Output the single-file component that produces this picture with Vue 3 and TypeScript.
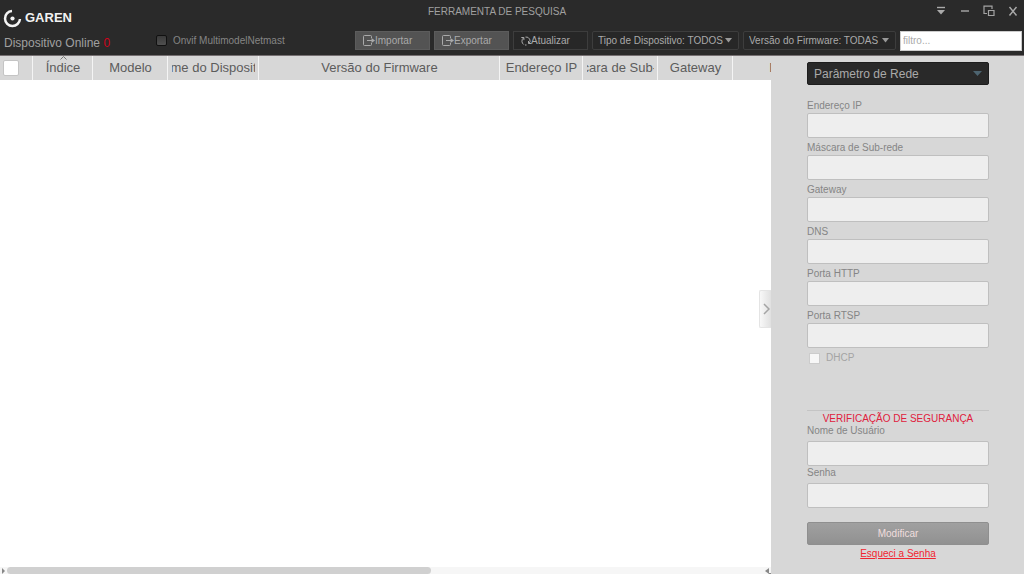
<script setup lang="ts">
import { ref } from 'vue'

interface Column {
  key: string
  label: string
  width: number
  sorted?: boolean
}

const columns: Column[] = [
  { key: 'index', label: 'Índice', width: 60, sorted: true },
  { key: 'model', label: 'Modelo', width: 75 },
  { key: 'name', label: 'Nome do Dispositivo', width: 91 },
  { key: 'firmware', label: 'Versão do Firmware', width: 241 },
  { key: 'ip', label: 'Endereço IP', width: 83 },
  { key: 'mask', label: 'Máscara de Sub-rede', width: 75 },
  { key: 'gateway', label: 'Gateway', width: 75 },
  { key: 'dns', label: 'DNS', width: 100 },
]
const tableWidth = 33 + columns.reduce((sum, c) => sum + c.width, 0)

const networkFields = [
  { id: 'ip', label: 'Endereço IP' },
  { id: 'mask', label: 'Máscara de Sub-rede' },
  { id: 'gateway', label: 'Gateway' },
  { id: 'dns', label: 'DNS' },
  { id: 'http', label: 'Porta HTTP' },
  { id: 'rtsp', label: 'Porta RTSP' },
]

const online = ref(0)
const filter = ref('')
</script>

<template>
  <div class="app">
    <header class="top">
      <div class="titlebar">
        <div class="brand">
          <svg width="19" height="19" viewBox="0 0 19 19" aria-hidden="true">
            <path d="M9 2A7.500 7.500 0 1 0 17 10" fill="none" stroke="#f4f4f4" stroke-width="2.500" />
            <circle cx="9.500" cy="9.500" r="2.100" fill="#f4f4f4" />
          </svg>
          <span>GAREN</span>
        </div>
        <h1>FERRAMENTA DE PESQUISA</h1>
        <div class="window-buttons">
          <button aria-label="Menu">
            <svg width="12" height="12" viewBox="0 0 12 12"><path d="M2 2.5h8" stroke="#aaa" stroke-width="1.4" /><path d="M2 5h8L6 9.5z" fill="#aaa" /></svg>
          </button>
          <button aria-label="Minimizar">
            <svg width="12" height="12" viewBox="0 0 12 12"><path d="M2 6h8" stroke="#aaa" stroke-width="1.4" /></svg>
          </button>
          <button aria-label="Restaurar">
            <svg width="12" height="12" viewBox="0 0 12 12" fill="none" stroke="#a4a4a4" stroke-width="1.2"><path d="M4 8.500H1V1.200h8V4" /><path d="M5.500 5.500H11V10.500H5.500z" /></svg>
          </button>
          <button aria-label="Fechar">
            <svg width="12" height="12" viewBox="0 0 12 12" fill="none" stroke="#aaa" stroke-width="1.4"><path d="M2.5 2l7 8.5M9.5 2l-7 8.5" /></svg>
          </button>
        </div>
      </div>
      <div class="toolbar">
        <p class="online">Dispositivo Online <b>{{ online }}</b></p>
        <label class="onvif"><input type="checkbox" />Onvif MultimodelNetmast</label>
        <div class="actions">
          <button v-for="name in ['Importar', 'Exportar']" :key="name" class="tool filled">
            <svg width="12" height="12" viewBox="0 0 12 12" fill="none" stroke="#aaa" stroke-width="1"><path d="M8.500 3V1.500q0-1-1-1H1.500q-1 0-1 1v8q0 1 1 1h6q1 0 1-1V8" /><path d="M4 5.500h6" /><path d="M8.500 3l3.500 2.500L8.500 8z" fill="#aaa" stroke="none" /></svg>{{ name }}
          </button>
          <button class="tool">
            <svg width="10" height="12" viewBox="0 0 10 12" fill="none" stroke="#aaa" stroke-width="1"><path d="M2.700 9.500A4 4 0 0 1 2.500 3M4.500 2A4 4 0 0 1 8 8.700M4 10h1.500" /><path d="M.3 2.500h2.600v2.600M10 8.500H7.500V6" /></svg>Atualizar
          </button>
          <div class="picker type">
            <select aria-label="Tipo de Dispositivo"><option>Tipo de Dispositivo: TODOS</option></select>
            <svg width="7" height="5" viewBox="0 0 7 5"><path d="M0 0h7L3.5 4.5z" fill="#999" /></svg>
          </div>
          <div class="picker version">
            <select aria-label="Versão do Firmware"><option>Versão do Firmware: TODAS</option></select>
            <svg width="7" height="5" viewBox="0 0 7 5"><path d="M0 0h7L3.5 4.5z" fill="#999" /></svg>
          </div>
          <input v-model="filter" class="filter" type="text" placeholder="filtro..." aria-label="Filtro" />
        </div>
      </div>
    </header>

    <div class="body">
      <main class="devices">
        <div class="table-area">
          <table :style="{ width: tableWidth + 'px' }">
            <colgroup>
              <col class="check-col" />
              <col v-for="c in columns" :key="c.key" :style="{ width: c.width + 'px' }" />
            </colgroup>
            <thead>
              <tr>
                <th><input class="select-all" type="checkbox" aria-label="Selecionar todos" /></th>
                <th v-for="c in columns" :key="c.key">
                  <svg v-if="c.sorted" class="sort" width="7" height="4" viewBox="0 0 7 4"><path d="M.5 3.5l3-3 3 3" fill="none" stroke="#777" /></svg>
                  <div class="cell"><span>{{ c.label }}</span></div>
                </th>
              </tr>
            </thead>
            <tbody></tbody>
          </table>
        </div>
        <div class="scroll" aria-hidden="true">
          <svg width="7" height="7" viewBox="0 0 7 7"><path d="M2 1v6l3-3z" fill="#888" /></svg>
          <div class="track"><div class="thumb"></div></div>
          <svg width="7" height="7" viewBox="0 0 7 7"><path d="M5 1v6L1 4z" fill="#888" /><path d="M5 6h2v1H5z" fill="#888" /></svg>
        </div>
        <button class="collapse" aria-label="Recolher painel">
          <svg width="7" height="12" viewBox="0 0 7 12"><path d="M1 1l5 5-5 5" fill="none" stroke="#a4a4a4" stroke-width="1.500" /></svg>
        </button>
      </main>

      <aside class="panel">
        <div class="picker section">
          <select aria-label="Seção"><option>Parâmetro de Rede</option></select>
          <svg width="9" height="5" viewBox="0 0 9 5"><path d="M0 0h9L4.500 5z" fill="#4d6470" /></svg>
        </div>
        <form class="network" @submit.prevent>
          <div v-for="f in networkFields" :key="f.id" class="field">
            <label :for="f.id">{{ f.label }}</label>
            <input :id="f.id" type="text" />
          </div>
          <label class="dhcp"><input type="checkbox" />DHCP</label>
        </form>
        <form class="security" @submit.prevent>
          <h2>VERIFICAÇÃO DE SEGURANÇA</h2>
          <div class="field">
            <label for="user">Nome de Usuário</label>
            <input id="user" type="text" />
          </div>
          <div class="field">
            <label for="password">Senha</label>
            <input id="password" type="password" />
          </div>
          <button class="modify">Modificar</button>
          <a href="#">Esqueci a Senha</a>
        </form>
      </aside>
    </div>
  </div>
</template>

<style>
body {
  margin: 0;
}
</style>

<style scoped>
.app {
  display: flex;
  flex-direction: column;
  min-height: 100vh;
  font: 10px/12px "Liberation Sans", Arial, sans-serif;
  color: #858585;
  background: #fff;
}
.app *,
.app {
  box-sizing: border-box;
}
button,
input,
select {
  margin: 0;
  font: inherit;
  color: inherit;
  border-radius: 0;
}
input[type='checkbox'] {
  appearance: none;
  flex: none;
}
svg {
  flex: none;
}
.top {
  background: #2a2a2a;
  border-bottom: 1px solid #756f71;
  color: #a0a0a0;
}
.titlebar {
  display: grid;
  grid-template-columns: 1fr auto 1fr;
  height: 28px;
  padding: 0 5px 0 3px;
}
.brand {
  display: flex;
  align-items: center;
  gap: 3px;
  padding-top: 8px;
  color: #f2f2f2;
  font: bold 13px/18px "Liberation Sans", Arial, sans-serif;
}
h1 {
  margin: 0;
  padding-top: 6px;
  padding-right: 28px;
  font-size: 10px;
  font-weight: normal;
}
.window-buttons {
  display: flex;
  justify-content: flex-end;
  align-items: center;
  gap: 12px;
  height: 22px;
}
.window-buttons button {
  display: flex;
  padding: 0;
  border: 0;
  background: none;
}
.toolbar {
  display: flex;
  align-items: center;
  height: 27px;
  padding: 0 2px 2px 4px;
}
.online {
  margin: 0;
  padding-top: 4px;
  width: 152px;
  font-size: 12px;
  white-space: nowrap;
}
.online b {
  font-weight: normal;
  color: #d0021b;
}
.onvif {
  display: flex;
  align-items: center;
  gap: 6px;
  color: #858585;
  white-space: nowrap;
}
.onvif input {
  width: 11px;
  height: 11px;
  border: 1px solid #111;
  border-radius: 2px;
  background: linear-gradient(#3a3a3a, #505050);
}
.actions {
  display: flex;
  align-items: center;
  margin-left: auto;
  gap: 4px;
}
.tool {
  display: flex;
  align-items: center;
  width: 75px;
  height: 19px;
  padding: 0 7px;
  border: 1px solid #3d3d3d;
  background: #272727;
  color: #aaa;
}
.tool.filled {
  background: #535353;
  border-color: #5c5c5c;
}
.picker {
  display: flex;
  align-items: center;
  position: relative;
}
.picker select {
  appearance: none;
  width: 100%;
  height: 19px;
  padding: 0 5px;
  border: 1px solid #3d3d3d;
  border-radius: 2px;
  background: #272727;
  color: #aaa;
}
.picker svg {
  position: absolute;
  right: 7px;
  pointer-events: none;
}
.type {
  width: 147px;
}
.version {
  width: 153px;
}
.filter {
  width: 122px;
  height: 20px;
  padding: 0 2px;
  border: 1px solid #ccc;
  background: #fff;
  color: #555;
}
.filter::placeholder {
  color: #aaa;
}
.body {
  display: flex;
  flex: 1;
}
.devices {
  position: relative;
  display: flex;
  flex-direction: column;
  flex: 1;
  min-width: 0;
}
.table-area {
  flex: 1;
  overflow: hidden;
}
table {
  table-layout: fixed;
  border-collapse: collapse;
}
.check-col {
  width: 33px;
}
th {
  position: relative;
  height: 24px;
  padding: 0;
  font: 13px/24px "Liberation Sans", Arial, sans-serif;
  color: #5c5c5c;
  background: #d7d7d7;
  box-shadow: inset -1px 0 #f4f4f4;
}
.cell {
  display: flex;
  justify-content: center;
  margin: 0 4px;
  overflow: hidden;
  white-space: nowrap;
}
.sort {
  position: absolute;
  top: 0;
  left: 27px;
}
.select-all {
  display: block;
  width: 16px;
  height: 16px;
  margin-left: 3px;
  border: 1px solid #c4c4c4;
  border-radius: 2px;
  background: #fff;
}
.scroll {
  display: flex;
  height: 7px;
  background: #f6f6f6;
}
.track {
  flex: 1;
}
.thumb {
  width: 56%;
  height: 7px;
  border-radius: 4px;
  background: #d0d0d0;
}
.collapse {
  position: absolute;
  top: 234px;
  right: 0;
  display: flex;
  align-items: center;
  justify-content: flex-end;
  width: 12px;
  height: 38px;
  padding: 0 1px;
  border: 1px solid #e4e4e4;
  border-right: 0;
  border-radius: 2px 0 0 2px;
  background: linear-gradient(90deg, #f8f8f8, #e0e0e0);
}
.panel {
  flex: none;
  width: 253px;
  padding: 6px 35px 0 36px;
  background: #d7d7d7;
}
.section select {
  height: 23px;
  padding: 0 6px;
  border-color: #1d1d1d;
  background: #292929;
  font-size: 12px;
}
.network {
  padding-top: 14px;
}
.field {
  display: flex;
  flex-direction: column;
}
.field label {
  line-height: 13px;
}
.field input {
  width: 100%;
  height: 25px;
  margin-top: 1px;
  margin-bottom: 3px;
  padding: 0 4px;
  border: 1px solid #bfbfbf;
  border-radius: 2px;
  background: #eee;
}
.dhcp {
  display: flex;
  align-items: center;
  gap: 6px;
  padding: 1px 0 0 2px;
  color: #a4a4a4;
}
.dhcp input {
  width: 11px;
  height: 11px;
  border: 1px solid #ccc;
  background: #f7f7f7;
}
.security {
  display: flex;
  flex-direction: column;
  margin-top: 46px;
  border-top: 1px solid #c4c4c4;
}
.security h2 {
  margin: 2px 0 0;
  font-size: 10px;
  line-height: 11px;
  font-weight: normal;
  text-align: center;
  color: #e0203c;
}
.security .field input {
  margin-top: 4px;
  margin-bottom: 0;
}
.modify {
  height: 23px;
  margin-top: 14px;
  border: 1px solid #8f8f8f;
  border-radius: 2px;
  background: linear-gradient(#a0a0a0, #919191);
  color: #f0dede;
}
.security a {
  margin-top: 3px;
  align-self: center;
  color: #f22430;
}
</style>
